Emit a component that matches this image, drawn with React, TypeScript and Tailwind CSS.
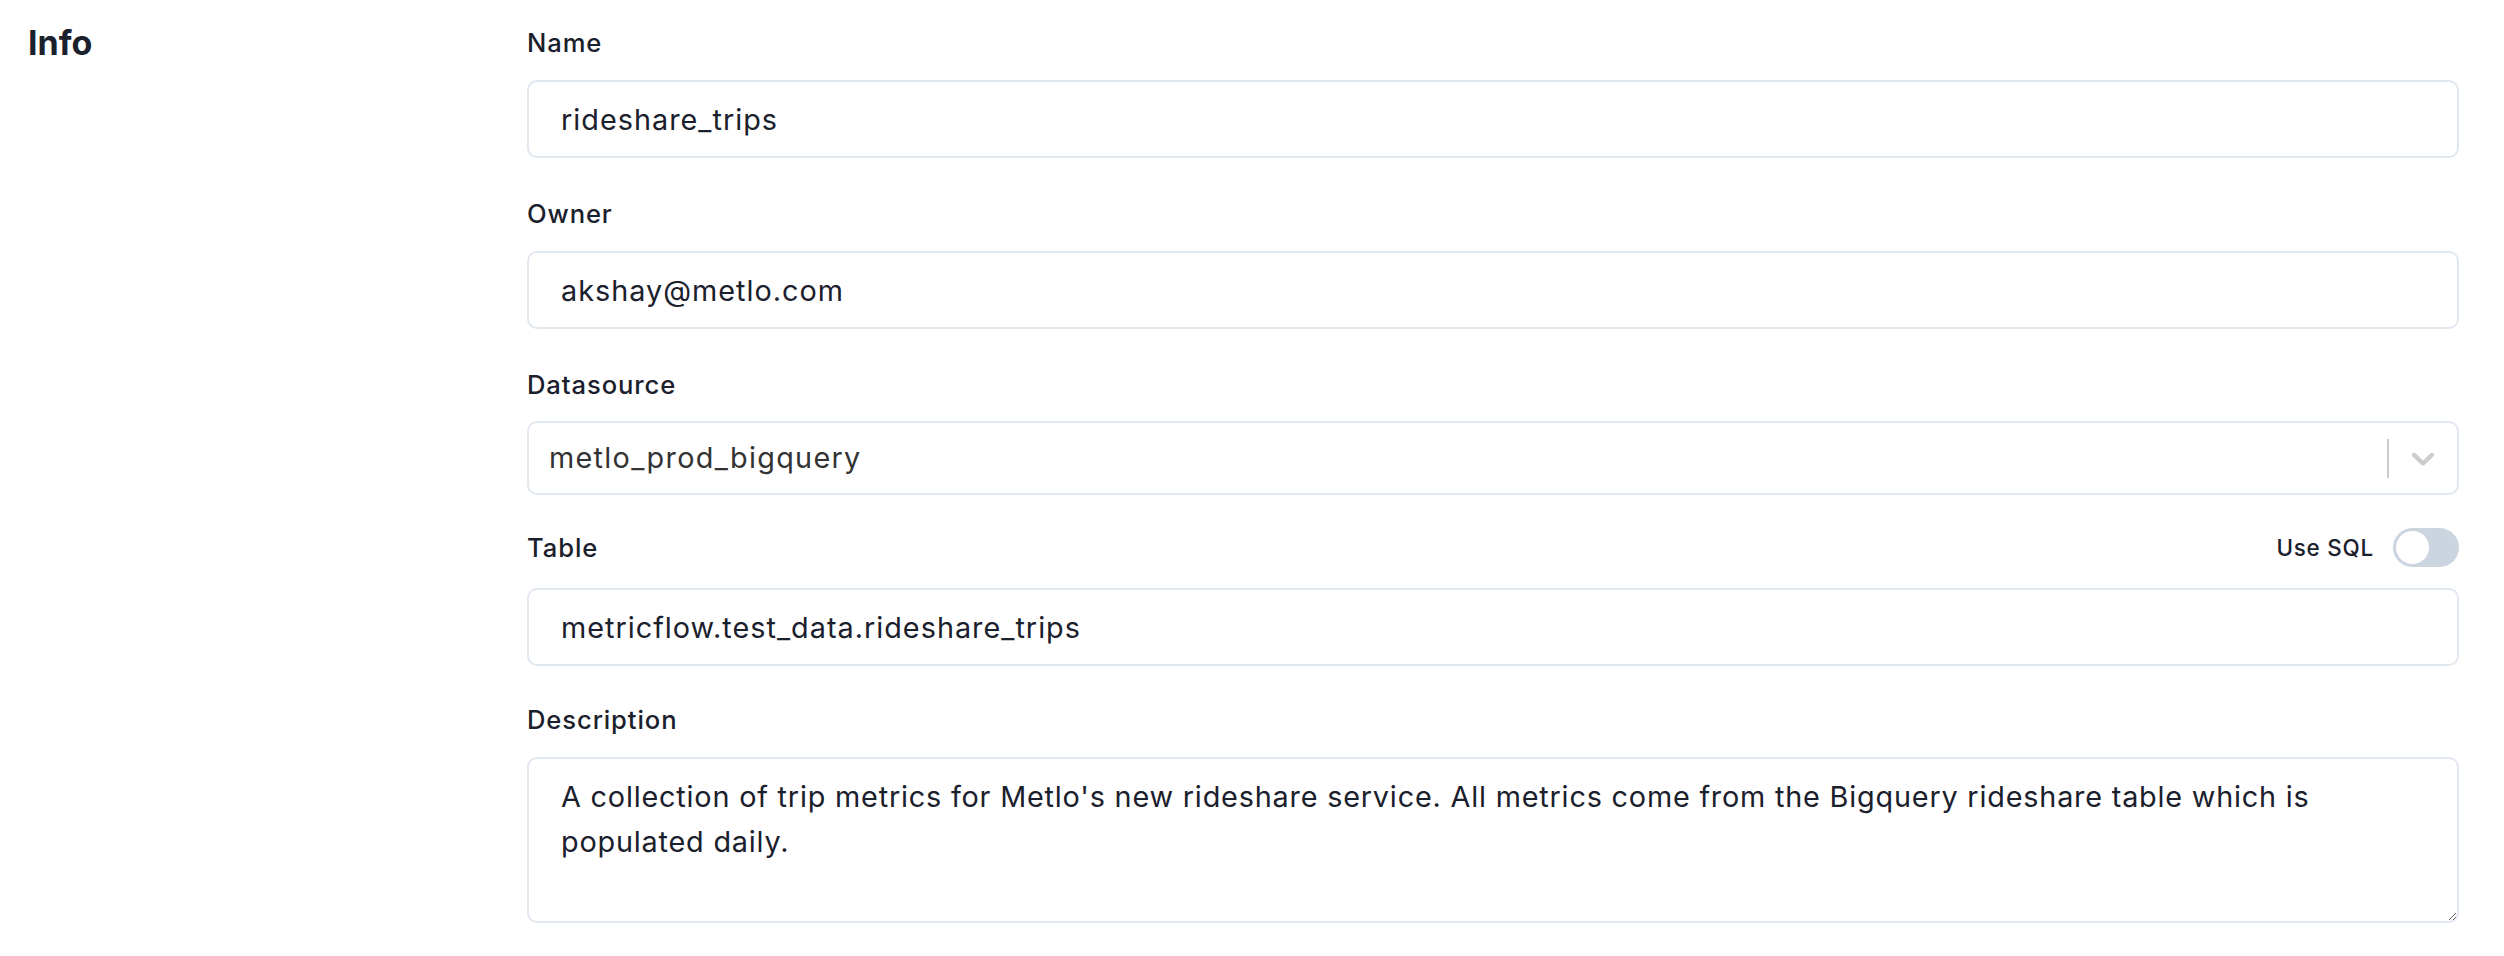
import React from "react";

function Label({ children, className = "" }: { children: React.ReactNode; className?: string }) {
  return (
    <label className={"block text-[25.6px] leading-[30px] font-medium tracking-[0.035em] text-[#1a202c] " + className}>
      {children}
    </label>
  );
}

function TextInput({ value }: { value: string }) {
  return (
    <input
      readOnly
      defaultValue={value}
      className="block w-full h-[78px] border-2 border-[#e2e8f0] rounded-[10px] pl-[32px] pr-[32px] text-[28.8px] tracking-[0.035em] text-[#1a202c] bg-white outline-none"
    />
  );
}

export default function App() {
  return (
    <div className="min-h-screen w-full bg-white font-['Inter','Noto_Sans',sans-serif]">
      <div className="flex pl-[28px] pr-[45px] pt-[23px]">
        <div className="w-[499px] shrink-0">
          <h2 className="text-[34px] leading-[40px] font-bold text-[#1a202c]">Info</h2>
        </div>
        <div className="flex-1 min-w-0 pt-[5px]">
          {/* Name */}
          <Label className="mb-[22px]">Name</Label>
          <TextInput value="rideshare_trips" />

          {/* Owner */}
          <Label className="mt-[41px] mb-[22px]">Owner</Label>
          <TextInput value="akshay@metlo.com" />

          {/* Datasource */}
          <Label className="mt-[41px] mb-[21px]">Datasource</Label>
          <div className="h-[74px] border-2 border-[#e2e8f0] rounded-[10px] flex items-center bg-white">
            <div className="flex-1 pl-[20px] text-[28.8px] tracking-[0.045em] text-[#333333] truncate">metlo_prod_bigquery</div>
            <div className="w-[2px] h-[39px] bg-[#cccccc]" />
            <div className="pl-[15px] pr-[15px] flex items-center">
              <svg width="38" height="38" viewBox="0 0 20 20" fill="#cccccc" aria-hidden="true">
                <path d="M4.516 7.548c0.436-0.446 1.043-0.481 1.576 0l3.908 3.747 3.908-3.747c0.533-0.481 1.141-0.446 1.574 0 0.436 0.445 0.408 1.197 0 1.615-0.406 0.418-4.695 4.502-4.695 4.502-0.217 0.223-0.502 0.335-0.787 0.335s-0.57-0.112-0.789-0.335c0 0-4.287-4.084-4.695-4.502s-0.436-1.170 0-1.615z" />
              </svg>
            </div>
          </div>

          {/* Table */}
          <div className="mt-[33px] mb-[21px] h-[39px] flex items-center justify-between">
            <Label>Table</Label>
            <div className="flex items-center gap-[19px]">
              <span className="text-[22.4px] leading-[30px] font-medium tracking-[0.035em] text-[#1a202c]">Use SQL</span>
              <div className="w-[66px] h-[39px] rounded-full bg-[#cbd5e0] p-[3px] flex items-center">
                <div className="w-[33px] h-[33px] rounded-full bg-white" />
              </div>
            </div>
          </div>
          <TextInput value="metricflow.test_data.rideshare_trips" />

          {/* Description */}
          <Label className="mt-[39px] mb-[22px]">Description</Label>
          <textarea
            readOnly
            defaultValue={
              "A collection of trip metrics for Metlo's new rideshare service. All metrics come from the Bigquery rideshare table which is\npopulated daily."
            }
            className="block w-full h-[166px] border-2 border-[#e2e8f0] rounded-[10px] pl-[32px] pr-[32px] pt-[15px] text-[28.8px] leading-[45px] tracking-[0.028em] text-[#1a202c] bg-white outline-none resize-y"
          />
        </div>
      </div>
    </div>
  );
}
